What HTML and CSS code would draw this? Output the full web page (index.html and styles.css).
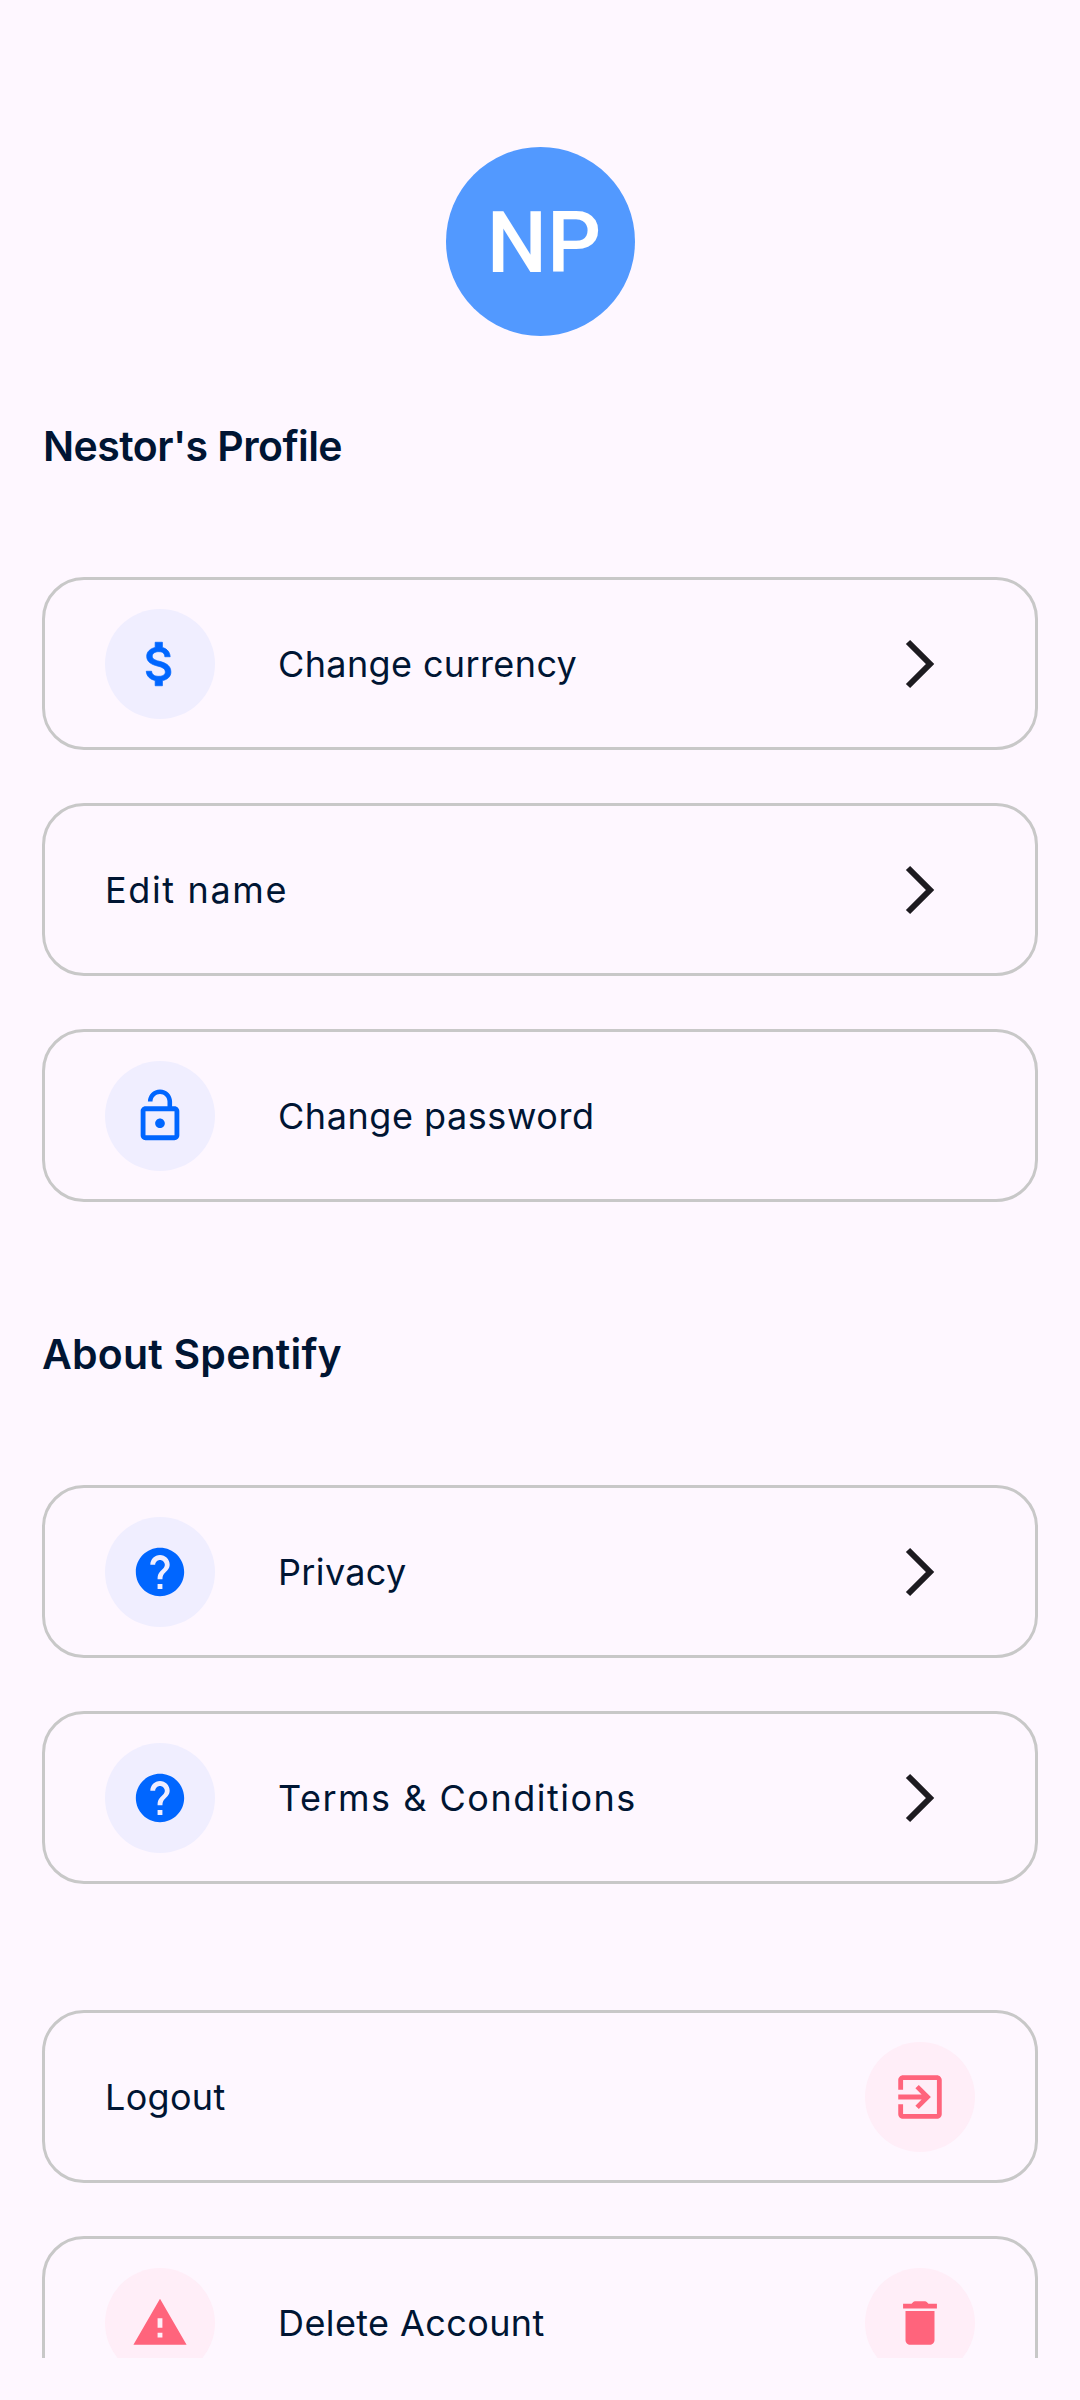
FILE: index.html
```html
<!DOCTYPE html>
<html lang="en">
<head>
<meta charset="utf-8">
<title>Profile</title>
<link rel="stylesheet" href="styles.css">
</head>
<body>
<svg class="defs" aria-hidden="true">
  <symbol id="chevron" viewBox="0 0 58 58"><path d="M17 7l22 22-22 22" fill="none" stroke="currentColor" stroke-width="6"/></symbol>
  <symbol id="dollar" viewBox="0 0 24 24"><path stroke="currentColor" stroke-width=".3" d="M11.8 10.9c-2.27-.59-3-1.2-3-2.15 0-1.09 1.01-1.85 2.7-1.85 1.78 0 2.44.85 2.5 2.1h2.21c-.07-1.72-1.12-3.3-3.21-3.81V3h-3v2.16c-1.94.42-3.5 1.68-3.5 3.61 0 2.31 1.91 3.46 4.7 4.13 2.5.6 3 1.48 3 2.41 0 .69-.49 1.79-2.7 1.79-2.06 0-2.87-.92-2.98-2.1h-2.2c.12 2.19 1.76 3.42 3.68 3.83V21h3v-2.15c1.95-.37 3.5-1.5 3.5-3.55 0-2.84-2.43-3.81-4.7-4.4z"/></symbol>
  <symbol id="lock" viewBox="0 0 24 24"><path d="M12 17c1.1 0 2-.9 2-2s-.9-2-2-2-2 .9-2 2 .9 2 2 2zm6-9h-1V6c0-2.76-2.24-5-5-5S7 3.24 7 6h1.9c0-1.71 1.39-3.1 3.1-3.1s3.1 1.39 3.1 3.1v2H6c-1.1 0-2 .9-2 2v10c0 1.1.9 2 2 2h12c1.1 0 2-.9 2-2V10c0-1.1-.9-2-2-2zm0 12H6V10h12v10z"/></symbol>
  <symbol id="help" viewBox="0 0 24 24"><path d="M12 2C6.48 2 2 6.48 2 12s4.48 10 10 10 10-4.480 10-10S17.520 2 12 2zm1 17h-2v-2h2v2zm2.070-7.750l-.9.920C13.450 12.900 13 13.500 13 15h-2v-.5c0-1.100.450-2.100 1.170-2.830l1.240-1.260c.370-.360.590-.860.590-1.410 0-1.100-.9-2-2-2s-2 .9-2 2H8c0-2.210 1.790-4 4-4s4 1.790 4 4c0 .880-.360 1.680-.930 2.250z"/></symbol>
  <symbol id="exit" viewBox="0 0 24 24"><path d="M10.090 15.590L11.500 17l5-5-5-5-1.410 1.410L12.670 11H3v2h9.670l-2.580 2.590zM19 3H5c-1.110 0-2 .9-2 2v4h2V5h14v14H5v-4H3v4c0 1.100.890 2 2 2h14c1.100 0 2-.9 2-2V5c0-1.100-.9-2-2-2z"/></symbol>
  <symbol id="warning" viewBox="0 0 24 24"><path d="M1 21h22L12 2 1 21zm12-3h-2v-2h2v2zm0-4h-2v-4h2v4z"/></symbol>
  <symbol id="trash" viewBox="0 0 24 24"><path d="M6 19c0 1.100.9 2 2 2h8c1.100 0 2-.9 2-2V7H6v12zM19 4h-3.500l-.7-.7c-.2-.2-.450-.3-.7-.3H9.900c-.250 0-.5.1-.7.3l-.7.7H5v2h14V4z"/></symbol>
</svg>
<main class="screen">
  <div class="avatar"><span class="initials">NP</span></div>

  <h2 class="heading heading-profile">Nestor's Profile</h2>
  <section class="group">
    <div class="card"><span class="badge"><svg class="icon"><use href="#dollar"/></svg></span><span class="label currency">Change currency</span><span class="trail"><svg class="icon"><use href="#chevron"/></svg></span></div>
    <div class="card"><span class="label edit">Edit name</span><span class="trail"><svg class="icon"><use href="#chevron"/></svg></span></div>
    <div class="card"><span class="badge"><svg class="icon"><use href="#lock"/></svg></span><span class="label password">Change password</span></div>
  </section>

  <h2 class="heading heading-about">About Spentify</h2>
  <section class="group">
    <div class="card"><span class="badge"><svg class="icon"><use href="#help"/></svg></span><span class="label privacy">Privacy</span><span class="trail"><svg class="icon"><use href="#chevron"/></svg></span></div>
    <div class="card"><span class="badge"><svg class="icon"><use href="#help"/></svg></span><span class="label terms">Terms &amp; Conditions</span><span class="trail"><svg class="icon"><use href="#chevron"/></svg></span></div>
  </section>

  <section class="group group-account">
    <div class="card"><span class="label logout">Logout</span><span class="badge danger"><svg class="icon"><use href="#exit"/></svg></span></div>
    <div class="card"><span class="badge danger"><svg class="icon"><use href="#warning"/></svg></span><span class="label delete">Delete Account</span><span class="badge danger"><svg class="icon"><use href="#trash"/></svg></span></div>
  </section>
</main>
</body>
</html>
```
FILE: styles.css
```css
* { box-sizing: border-box; }

body {
  margin: 0;
  height: 2400px;
  overflow: hidden;
  background: #fef7ff;
  color: #001533;
  font-family: Inter, "Liberation Sans", sans-serif;
}

.defs { display: none; }

.screen {
  display: flex;
  flex-direction: column;
  height: 2358px;
  padding: 147px 42px 0;
  overflow: hidden;
}

.screen > * { flex-shrink: 0; }

.avatar {
  display: flex;
  align-items: center;
  justify-content: center;
  align-self: center;
  width: 189px;
  height: 189px;
  border-radius: 50%;
  background: #5299ff;
}

.initials {
  padding: 2px 0 0 8px;
  color: #fff;
  font-family: Roboto, sans-serif;
  font-size: 85px;
  font-weight: 500;
  line-height: 100px;
}

.heading {
  margin: 0;
  font-size: 41px;
  font-weight: 600;
  line-height: 60px;
  white-space: nowrap;
}

.heading-profile { margin: 80px 0 101px; padding-left: 1px; letter-spacing: -0.55px; }
.heading-about { margin: 122px 0 101px; letter-spacing: 0.2px; }

.group {
  display: flex;
  flex-direction: column;
  gap: 53px;
}

.group-account { margin-top: 126px; }

.card {
  display: flex;
  align-items: center;
  gap: 63px;
  height: 173px;
  padding: 0 60px;
  border: 3px solid #c8c8c8;
  border-radius: 42px;
}

.badge,
.trail {
  display: flex;
  flex: none;
  align-items: center;
  justify-content: center;
  width: 110px;
  height: 110px;
}

.badge {
  border-radius: 50%;
  background: #f0eeff;
  color: #0066ff;
}

.danger {
  background: #ffeef8;
  color: #ff647c;
}

.trail { color: #1d1b20; }

.icon {
  width: 58px;
  height: 58px;
  fill: currentColor;
}

.label {
  flex: 1;
  padding-top: 1px;
  font-size: 36px;
  font-weight: 400;
  line-height: 46px;
  white-space: nowrap;
}

.currency { letter-spacing: 0.38px; }
.edit { letter-spacing: 1.65px; }
.password { letter-spacing: 0.55px; }
.privacy { letter-spacing: 0.35px; }
.terms { letter-spacing: 1.5px; }
.logout { letter-spacing: 0.3px; }
.delete { letter-spacing: 0.4px; }
```
